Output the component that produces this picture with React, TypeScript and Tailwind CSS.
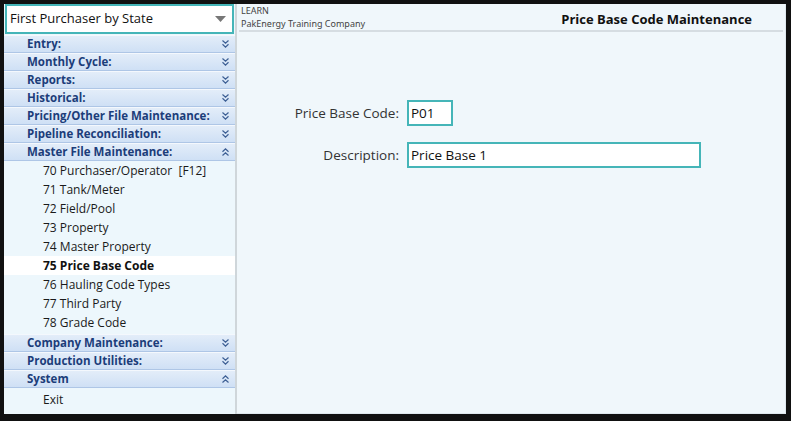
import React from 'react';

const headersTop = [
  'Entry:',
  'Monthly Cycle:',
  'Reports:',
  'Historical:',
  'Pricing/Other File Maintenance:',
];

const masterItems = [
  '70 Purchaser/Operator  [F12]',
  '71 Tank/Meter',
  '72 Field/Pool',
  '73 Property',
  '74 Master Property',
  '75 Price Base Code',
  '76 Hauling Code Types',
  '77 Third Party',
  '78 Grade Code',
];

const Chevrons = ({ up = false }: { up?: boolean }) => (
  <svg width="9" height="10" viewBox="0 0 9 10" className={up ? 'rotate-180' : ''}>
    <path d="M1.5 1.5 L4.5 4.3 L7.5 1.5 M1.5 5.3 L4.5 8.1 L7.5 5.3" fill="none" stroke="#3d5f94" strokeWidth="1.2" />
  </svg>
);

const Header = ({ label, up = false }: { label: string; up?: boolean }) => (
  <div className="h-[18px] flex items-center justify-between pl-[23px] pr-[5px] bg-gradient-to-b from-[#e3edf9] to-[#cfe0f5] border-t border-[#f4f8fd] border-b border-b-[#aec6e6]">
    <span className="text-[11.5px] font-bold text-[#1c3d7a] leading-none">{label}</span>
    <Chevrons up={up} />
  </div>
);

const Item = ({ label, active = false }: { label: string; active?: boolean }) => (
  <div
    className={`h-[19px] flex items-center pl-[39px] text-[12px] leading-none ${
      active ? 'bg-white font-bold text-[#111]' : 'text-[#1a1a1a]'
    }`}
  >
    <span className="whitespace-pre">{label}</span>
  </div>
);

export default function App() {
  return (
    <div className="w-[791px] h-[421px] bg-[#111] pt-[4px] pl-[4px] pr-[5px] pb-[7px] font-['Open_Sans',sans-serif]">
      <div className="flex h-full bg-[#f0f7fb]">
        <div className="w-[231px] flex flex-col bg-[#edf7fc]">
          <div className="h-[30px] mx-[1px] flex items-center justify-between border-[2px] border-[#45b5b8] bg-white pl-[3px] pr-[6px]">
            <span className="text-[13px] text-[#111]">First Purchaser by State</span>
            <svg width="11" height="6" viewBox="0 0 11 6">
              <path d="M0 0 H11 L5.5 6 Z" fill="#777" />
            </svg>
          </div>
          <div className="mt-[1px]">
            {headersTop.map((h) => (
              <Header key={h} label={h} />
            ))}
            <Header label="Pipeline Reconciliation:" />
            <Header label="Master File Maintenance:" up />
          </div>
          <div className="pt-[0px] pb-[2px]">
            {masterItems.map((m) => (
              <Item key={m} label={m} active={m.startsWith('75')} />
            ))}
          </div>
          <Header label="Company Maintenance:" />
          <Header label="Production Utilities:" />
          <Header label="System" up />
          <div className="pt-[2px]">
            <Item label="Exit" />
          </div>
        </div>
        <div className="w-[2px] bg-[#cfd6da]" />
        <div className="flex-1 flex flex-col border-r border-[#dfe8ee] border-b">
          <div className="mx-[2px] h-[28px] flex justify-between items-start border-b-[2px] border-[#d6dde2]">
            <div className="pl-[2px] text-[9px] leading-[13px] text-[#444] font-['Noto_Sans',sans-serif]">
              <div>LEARN</div>
              <div>PakEnergy Training Company</div>
            </div>
            <div className="pr-[31px] pt-[6px] text-[13px] font-bold text-[#111]">Price Base Code Maintenance</div>
          </div>
          <div className="pt-[68px] pl-[55px] flex flex-col gap-[16px]">
            <div className="flex items-center gap-[8px]">
              <label className="w-[107px] text-right text-[13.5px] text-[#333]">Price Base Code:</label>
              <div className="w-[46px] h-[26px] border-[2px] border-[#45b5b8] bg-white flex items-center pl-[2px] text-[13.5px] text-[#111]">P01</div>
            </div>
            <div className="flex items-center gap-[8px]">
              <label className="w-[107px] text-right text-[13.5px] text-[#333]">Description:</label>
              <div className="w-[294px] h-[26px] border-[2px] border-[#45b5b8] bg-white flex items-center pl-[2px] text-[13.5px] text-[#111]">Price Base 1</div>
            </div>
          </div>
        </div>
      </div>
    </div>
  );
}
